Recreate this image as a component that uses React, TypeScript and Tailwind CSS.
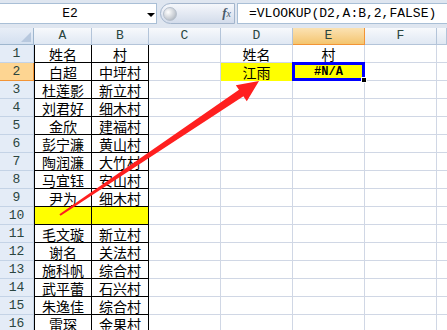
import React from "react";

const rows: [string, string][] = [
  ["姓名", "村"],
  ["白超", "中坪村"],
  ["杜莲影", "新立村"],
  ["刘君好", "细木村"],
  ["金欣", "建福村"],
  ["彭宁濂", "黄山村"],
  ["陶润濂", "大竹村"],
  ["马宜钰", "安山村"],
  ["尹为", "细木村"],
  ["", ""],
  ["毛文璇", "新立村"],
  ["谢名", "关法村"],
  ["施科帆", "综合村"],
  ["武平蕾", "石兴村"],
  ["朱逸佳", "综合村"],
  ["雷琛", "金果村"],
];

const CJK = "font-['Noto_Sans_CJK_SC',sans-serif] text-[14px] leading-[16px]";
const MONO = "font-['Liberation_Mono','DejaVu_Sans_Mono',monospace]";

export default function App() {
  const cols = ["A", "B", "C", "D", "E", "F", ""];
  return (
    <div className="relative w-[447px] h-[330px] overflow-hidden bg-white">
      {/* formula bar */}
      <div className="flex h-[28px] bg-[#dfe6f0] pt-[3px] pb-[4px]">
        <div className="relative flex w-[157px] shrink-0 items-center border border-l-0 border-[#a9bfd6] bg-white">
          <span className={MONO + " w-[140px] text-center text-[13px] leading-[16px] text-black"}>E2</span>
          <span className="absolute left-[147px] top-[9px] h-0 w-0 border-l-[4px] border-r-[4px] border-t-[4px] border-l-transparent border-r-transparent border-t-black" />
        </div>
        <div className="ml-[3px] flex w-[75px] shrink-0 items-center rounded-l-full border border-[#a3b5cc] bg-gradient-to-b from-[#f5f7fb] to-[#d3dceb]">
          <span className="ml-[2px] h-[14px] w-[14px] rounded-full border border-[#b6c0cc] bg-[radial-gradient(circle_at_35%_35%,#ffffff,#c7ccd3_60%,#9aa3ae)]" />
          <span className="ml-auto mr-[3px] font-['Liberation_Serif',serif] text-[13px] italic leading-[16px] text-[#4a5a6a]">
            <span className="font-bold">f</span>
            <span className="text-[10px]">x</span>
          </span>
        </div>
        <div className="ml-[2px] flex min-w-0 flex-1 items-center overflow-hidden border border-r-0 border-[#a9bfd6] bg-white pl-[11px]">
          <span className={MONO + " whitespace-nowrap text-[13px] leading-[16px] text-black"}>=VLOOKUP(D2,A:B,2,FALSE)</span>
        </div>
      </div>

      {/* grid */}
      <div className="grid grid-cols-[34px_58px_57px_72px_72px_72px_72px_1fr] grid-rows-[17px] auto-rows-[18px]">
        <div className="relative border-b border-r border-[#9eb6ce] bg-gradient-to-b from-[#e8eef7] to-[#d4e0f0]">
          <span className="absolute bottom-[2px] right-[2px] h-0 w-0 border-b-[10px] border-l-[10px] border-b-[#b7c8de] border-l-transparent" />
        </div>
        {cols.map((c, i) =>
          c === "E" ? (
            <div
              key={i}
              className={MONO + " flex items-center justify-center border-b border-r border-[#f29436] bg-gradient-to-b from-[#fbe2b3] to-[#f4c56e] text-[13px] leading-[14px] text-[#2a4540]"}
            >
              {c}
            </div>
          ) : (
            <div
              key={i}
              className={MONO + " flex items-center justify-center border-b border-r border-[#b3c4d9] bg-gradient-to-b from-[#f7f9fc] to-[#e0e8f3] text-[13px] leading-[14px] text-[#2a4540]"}
            >
              {c}
            </div>
          )
        )}
        {rows.map((r, ri) => {
          const n = ri + 1;
          const yellow = n === 10;
          return (
            <React.Fragment key={n}>
              <div
                className={
                  MONO +
                  (n === 2
                    ? " flex items-center justify-center border-b border-r border-[#f29436] bg-[#fdd592] text-[13px] leading-[14px] text-[#2a4540]"
                    : " flex items-center justify-center border-b border-r border-[#c4d3e6] bg-[#e4ecf7] text-[13px] leading-[14px] text-[#2a4540]")
                }
              >
                {n}
              </div>
              <div
                className={
                  CJK +
                  (yellow ? " bg-[#ffff00]" : " bg-white") +
                  " flex items-center justify-center border-b border-l border-r border-black text-black"
                }
              >
                {r[0]}
              </div>
              <div
                className={
                  CJK +
                  (yellow ? " bg-[#ffff00]" : " bg-white") +
                  " flex items-center justify-center border-b border-r border-black text-black"
                }
              >
                {r[1]}
              </div>
              <div className="border-b border-r border-[#d0d7e5]" />
              {n === 2 ? (
                <div className={CJK + " flex items-center justify-center border-b border-r border-[#ffff00] bg-[#ffff00] text-black"}>
                  江雨
                </div>
              ) : (
                <div className={CJK + " flex items-center justify-center border-b border-r border-[#d0d7e5] text-black"}>
                  {n === 1 ? "姓名" : ""}
                </div>
              )}
              {n === 2 ? (
                <div className="relative flex items-center justify-center border-b border-r border-[#ffff00] bg-[#ffff00]">
                  <span className={MONO + " text-[12px] font-bold leading-[14px] text-black"}>#N/A</span>
                  <span className="absolute -bottom-[1px] -left-[1px] -right-[1px] -top-[1px] z-10 border-[3px] border-[#0000ff]" />
                  <span className="absolute -bottom-[3px] -right-[3px] z-20 h-[6px] w-[6px] border border-white bg-black" />
                </div>
              ) : (
                <div className={CJK + " flex items-center justify-center border-b border-r border-[#d0d7e5] text-black"}>
                  {n === 1 ? "村" : ""}
                </div>
              )}
              <div className="border-b border-r border-[#d0d7e5]" />
              <div className="border-b border-[#d0d7e5]" />
            </React.Fragment>
          );
        })}
      </div>

      {/* red arrow */}
      <svg
        className="pointer-events-none absolute left-0 top-0 z-30"
        width="447"
        height="330"
        viewBox="0 0 447 330"
      >
        <polygon
          points="60.6,215.8 59.4,214.2 239.0,89.8 235.8,85.2 259,81 246.8,101.2 243.4,96.2"
          fill="#ff1f1f"
        />
      </svg>
    </div>
  );
}
